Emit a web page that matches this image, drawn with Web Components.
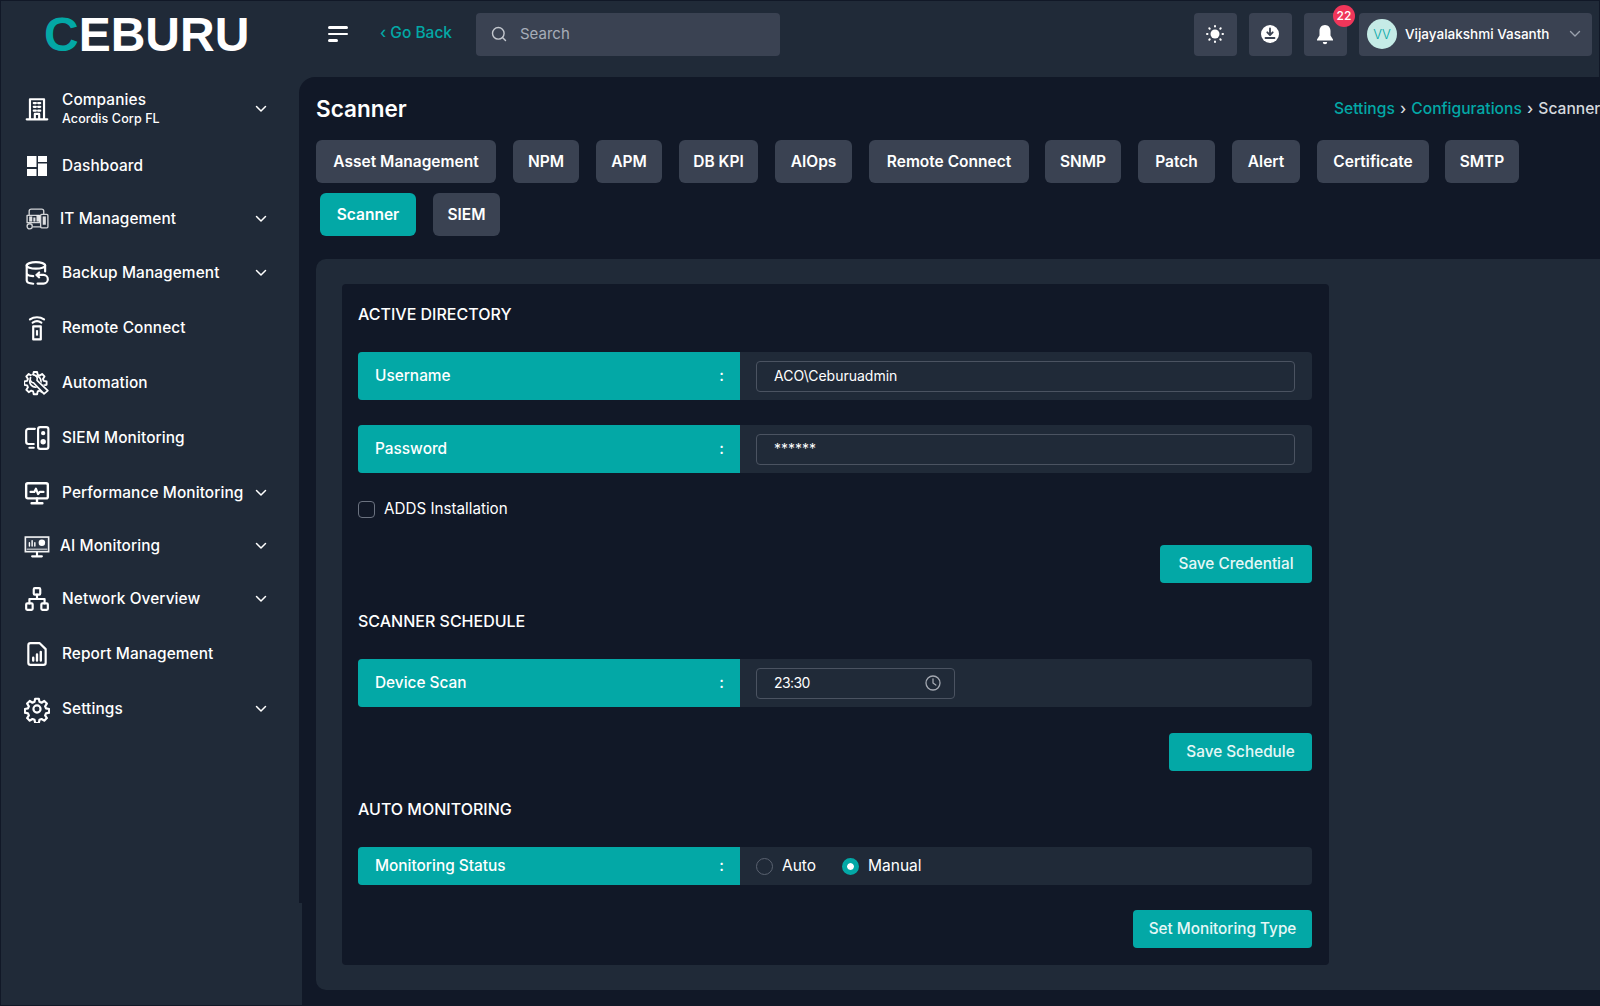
<!DOCTYPE html>
<html lang="en">
<head>
<meta charset="utf-8">
<title>Scanner</title>
<style>
  html, body { margin: 0; height: 100%; background: #111827; overflow: hidden; }
  body { font-family: Inter, "Open Sans", "Liberation Sans", sans-serif; color: #fff; }
</style>
</head>
<body>
<app-shell>
  <app-sidebar slot="side"></app-sidebar>
  <app-topbar slot="top"></app-topbar>
  <scanner-page></scanner-page>
</app-shell>

<script>
const TEAL = "#03a8a6";
const FONT = `Inter, "Open Sans", "Liberation Sans", sans-serif`;
const GEAR = "M10.300 2.500h3.400l.6 2.900 1.900.8 2.500-1.600 2.400 2.400-1.600 2.500.8 1.900 2.900.6v3.400l-2.900.6-.8 1.900 1.600 2.500-2.400 2.400-2.500-1.600-1.900.8-.6 2.900h-3.400l-.6-2.900-1.900-.8-2.500 1.600-2.400-2.400 1.600-2.500-.8-1.900-2.900-.6v-3.400l2.900-.6.800-1.900-1.600-2.500 2.400-2.400 2.500 1.600 1.900-.8z";

const ICONS = {
  building: `<path d="M5.500 21V3h13v18M2.500 21.500h19M10 21v-4.500h4V21M9 6.500h2M13 6.500h2M9 10h2M13 10h2M9 13.500h2M13 13.500h2"/>`,
  dashboard: `<g fill="#fff" stroke="none"><rect x="2" y="2" width="9.500" height="11"/><rect x="13" y="2" width="9" height="6"/><rect x="2" y="15" width="9.500" height="7"/><rect x="13" y="9.500" width="9" height="12.500"/></g>`,
  it: `<g stroke-width="1.300" opacity=".8"><path d="M4 9V5a2 2 0 0 1 2-2h10a2 2 0 0 1 2 2v3"/><rect x="15" y="8" width="7" height="13" rx="1"/><circle cx="4.500" cy="19.500" r="2.500"/><path d="M8 20h7M2 9h12v7H2z"/></g><g fill="#fff" stroke="none" opacity=".85"><rect x="4" y="10" width="3" height="5"/><rect x="8" y="11" width="2" height="4"/><rect x="11" y="9" width="3" height="6"/><rect x="17" y="10" width="3" height="8"/></g>`,
  backup: `<ellipse cx="11" cy="5" rx="8.500" ry="3"/><path d="M2.500 5v14c0 1.500 2.500 2.700 6 2.900M19.500 5v5.500M2.500 12c0 1.500 2.500 2.700 6 2.900"/><path d="M14 11.500l-2.500 2.300 2.500 2.200M11.500 13.800h6.500a3.800 3.800 0 0 1 0 8h-5.500"/>`,
  remote: `<path d="M8.500 10.500h7v12h-7zM8 7c2.400-1.600 5.600-1.600 8 0M5.500 4c3.800-2.600 9.200-2.600 13 0"/><rect x="11" y="14" width="2" height="5" fill="#fff" stroke="none"/>`,
  automation: `<path d="${GEAR}" transform="translate(-.5 -.5) scale(.92)" stroke-width="1.900"/><circle cx="10.500" cy="10.500" r="5.200" stroke-width="1.600"/><path d="M8 8l13 13" stroke="#202a38" stroke-width="6"/><path d="M9 12l9.500 10M12 9.500l10 9.500M18.500 22l3.500-3M6 7a3.600 3.600 0 0 0 3 5M12 9.500a3.600 3.600 0 0 0-3-5" stroke-width="1.600"/>`,
  siem: `<path d="M10 3.500H4a2 2 0 0 0-2 2v10a2 2 0 0 0 2 2h5M5 21h4"/><rect x="13" y="2" width="9.500" height="20" rx="2"/><circle cx="17.700" cy="7.500" r="1" fill="#fff"/><circle cx="17.700" cy="15.500" r="1.500" fill="#fff"/>`,
  perf: `<rect x="2" y="3" width="20" height="14" rx="1.500" stroke-width="2.200"/><path d="M12 17v4M7 21.500h10" stroke-width="2.200"/><path d="M6 11h3.500l1.500-3 2 5 1.500-2h3.500"/>`,
  ai: `<rect x="0.500" y="3" width="23" height="15" fill="#fff" stroke="none" opacity=".95"/><rect x="2" y="4.500" width="20" height="12" fill="#2f3948" stroke="none"/><path d="M12 18v3M7.500 21.500h9" stroke-width="2"/><path d="M3 15h18" stroke-width="1.500" opacity=".6"/><path d="M5 12V9M7.500 12V7M10 12V9" stroke-width="1.300"/><circle cx="16.500" cy="9" r="3" fill="#fff" stroke="none"/>`,
  network: `<rect x="9" y="2" width="6" height="6" rx="1"/><rect x="2" y="16" width="6" height="6" rx="1"/><rect x="16" y="16" width="6" height="6" rx="1"/><path d="M12 8v4M5 16v-4h14v4"/>`,
  report: `<path d="M6 2h8.500l5.500 5.500V20a2 2 0 0 1-2 2H6a2 2 0 0 1-2-2V4a2 2 0 0 1 2-2z"/><path d="M8.500 18v-2.500M12 18v-5.500M15.500 18V10" stroke-width="2.200"/>`,
  settings: `<circle cx="12" cy="12" r="3.300"/><path d="${GEAR}"/>`
};

function svgIcon(name, size) {
  return `<svg viewBox="0 0 24 24" width="${size}" height="${size}" fill="none" stroke="#fff" stroke-width="2" stroke-linecap="round" stroke-linejoin="round">${ICONS[name]}</svg>`;
}

// Page frame: sidebar on the left, topbar + content on the right
class AppShell extends HTMLElement {
  constructor() {
    super();
    this.attachShadow({ mode: "open" }).innerHTML = `
    <style>
      :host { display: grid; grid-template-columns: 299px 1fr; width: 1600px; height: 1006px; overflow: hidden;
        background: #111827; position: relative; }
      .right { display: flex; flex-direction: column; min-width: 0; background: #202a38; height: 1006px; }
      .content { flex: 1; background: #111827; border-top-left-radius: 16px; min-height: 0; }
    </style>
    <slot name="side"></slot>
    <div class="right">
      <slot name="top"></slot>
      <div class="content"><slot></slot></div>
    </div>`;
  }
}

class NavItem extends HTMLElement {
  constructor() {
    super();
    const icon = this.getAttribute("icon");
    const size = this.getAttribute("size") || 26;
    const chevron = this.hasAttribute("chevron");
    const gap = this.getAttribute("gap") || 12;
    this.attachShadow({ mode: "open" }).innerHTML = `
    <style>
      :host { display: flex; align-items: center; height: 40px; padding-left: 23px; padding-right: 35px;
        box-sizing: border-box; font: 500 15.400px/20px ${FONT}; color: #fff; }
      .ic { width: 26px; display: flex; justify-content: center; flex: none; }
      .lbl { flex: 1; margin-left: ${gap}px; white-space: nowrap; letter-spacing: .1px; }
      .chev { flex: none; width: 12px; height: 8px; }
    </style>
    <span class="ic">${svgIcon(icon, size)}</span>
    <span class="lbl"><slot></slot></span>
    ${chevron ? `<svg class="chev" viewBox="0 0 12 8" fill="none" stroke="#fff" stroke-width="1.500" stroke-linecap="round" stroke-linejoin="round"><path d="M1.500 1.500 6 6l4.500-4.500"/></svg>` : ""}`;
  }
}

class AppSidebar extends HTMLElement {
  constructor() {
    super();
    this.attachShadow({ mode: "open" }).innerHTML = `
    <style>
      :host { display: block; width: 302px; height: 1006px; background: #202a38; border: solid #111827; border-width: 1px 0 1px 1px; box-sizing: border-box;
        position: relative; z-index: 2; clip-path: polygon(0 0, 299px 0, 299px 903px, 302px 903px, 302px 100%, 0 100%); }
      .logo { height: 86px; padding: 10px 0 0 43px; box-sizing: border-box;
        font: 800 48px/1 "Liberation Sans", sans-serif; letter-spacing: 0; color: #fff; }
      .logo b { color: ${TEAL}; font-weight: 800; }
      .sub { display: block; font-size: 12.500px; line-height: 18px; }
      nav { display: flex; flex-direction: column; }
      .companies { height: 44px; }
    </style>
    <div class="logo"><span><b>C</b>EBURU</span></div>
    <nav>
      <nav-item class="companies" icon="building" chevron>Companies<span class="sub">Acordis Corp FL</span></nav-item>
      <nav-item icon="dashboard" size="24" style="margin-top:15px">Dashboard</nav-item>
      <nav-item icon="it" size="25" chevron gap="10" style="margin-top:12.500px">IT Management</nav-item>
      <nav-item icon="backup" chevron style="margin-top:14.500px">Backup Management</nav-item>
      <nav-item icon="remote" style="margin-top:15px">Remote Connect</nav-item>
      <nav-item icon="automation" style="margin-top:15px">Automation</nav-item>
      <nav-item icon="siem" style="margin-top:15px">SIEM Monitoring</nav-item>
      <nav-item icon="perf" chevron style="margin-top:14.500px">Performance Monitoring</nav-item>
      <nav-item icon="ai" chevron gap="10" style="margin-top:13.500px">AI Monitoring</nav-item>
      <nav-item icon="network" chevron style="margin-top:12.500px">Network Overview</nav-item>
      <nav-item icon="report" style="margin-top:15px">Report Management</nav-item>
      <nav-item icon="settings" size="28" chevron style="margin-top:15px">Settings</nav-item>
    </nav>`;
  }
}

class TopButton extends HTMLElement {
  constructor() {
    super();
    this.attachShadow({ mode: "open" }).innerHTML = `
    <style>
      :host { display: flex; align-items: center; justify-content: center; width: 43px; height: 43px; background: #3a4252;
        border-radius: 4px; position: relative; flex: none; padding-right: 2px; box-sizing: border-box; }
    </style>
    <slot></slot>`;
  }
}

class AppTopbar extends HTMLElement {
  constructor() {
    super();
    this.attachShadow({ mode: "open" }).innerHTML = `
    <style>
      :host { display: flex; align-items: center; height: 77px; box-sizing: border-box; padding: 0 7px 10px 0; flex: none;
        border-top: 1px solid #111827; border-right: 1px solid #111827; }
      .burger { width: 20px; margin-left: 29px; display: flex; flex-direction: column; gap: 4px; }
      .burger i { display: block; height: 2.500px; background: #fff; border-radius: 2px; }
      .burger i:last-child { width: 10px; }
      .back { color: ${TEAL}; font: 500 15.500px/20px ${FONT}; margin-left: 32px; width: 96px; margin-top: -2px; }
      .search { width: 304px; height: 43px; background: #3a4252; border-radius: 4px; display: flex; align-items: center;
        padding-left: 15px; box-sizing: border-box; flex: none; font: 400 15px/20px ${FONT}; color: #a7adb8; gap: 13px; }
      .spacer { flex: 1; }
      .btns { display: flex; gap: 12px; align-items: center; }
      .badge { position: absolute; right: -8px; top: -8px; width: 22px; height: 22px; border-radius: 50%; background: #f0365a;
        color: #fff; font: 500 12px/22px ${FONT}; text-align: center; }
      .user { width: 233px; height: 43px; background: #3a4252; border-radius: 4px; display: flex; align-items: center;
        padding-left: 8px; box-sizing: border-box; font: 500 13.500px/20px ${FONT}; }
      .avatar { width: 30px; height: 30px; border-radius: 50%; background: #c5ebe6; color: ${TEAL}; font: 300 13px/30px ${FONT};
        text-align: center; flex: none; margin-right: 8px; }
      .name { flex: 1; white-space: nowrap; }
      .caret { margin-right: 11px; }
    </style>
    <div class="burger"><i></i><i></i><i></i></div>
    <div class="back">&lsaquo; Go Back</div>
    <div class="search">
      <svg width="16" height="16" viewBox="0 0 16 16" fill="none" stroke="#c4c8cf" stroke-width="1.400" stroke-linecap="round"><circle cx="7.300" cy="7.300" r="5.800"/><path d="M11.500 11.500 14.500 14.500"/></svg>
      <span>Search</span>
    </div>
    <div class="spacer"></div>
    <div class="btns">
      <top-button><svg width="18" height="18" viewBox="0 0 18 18" fill="#fff"><circle cx="9" cy="9" r="4.500"/><g stroke="#fff" stroke-width="2" stroke-linecap="round"><path d="M9 1v.5M9 16.500v.5M1 9h.5M16.500 9h.5M3.300 3.300l.4.4M14.300 14.300l.4.4M3.300 14.700l.4-.4M14.300 3.700l.4-.4"/></g></svg></top-button>
      <top-button><svg width="20" height="20" viewBox="0 0 20 20"><circle cx="10" cy="10" r="9" fill="#fff"/><path d="M10 4.500v6M7.300 8.300 10 11l2.700-2.700M5.500 14h9" fill="none" stroke="#3a4252" stroke-width="1.800" stroke-linecap="round" stroke-linejoin="round"/></svg></top-button>
      <top-button><svg width="18" height="21" viewBox="0 0 18 21" fill="#fff"><path d="M9 1C5.500 1 3.500 3.800 3.500 7v4.500L1 15.500v1h16v-1l-2.500-4V7C14.500 3.800 12.500 1 9 1z"/><path d="M6.800 18h4.400a2.200 2.200 0 0 1-4.400 0z"/></svg><span class="badge">22</span></top-button>
      <div class="user">
        <span class="avatar">VV</span>
        <span class="name">Vijayalakshmi Vasanth</span>
        <svg class="caret" width="12" height="8" viewBox="0 0 12 8" fill="none" stroke="#9aa1ad" stroke-width="1.400" stroke-linecap="round" stroke-linejoin="round"><path d="M1.500 1.500 6 6l4.500-4.500"/></svg>
      </div>
    </div>`;
  }
}

class TabButton extends HTMLElement {
  constructor() {
    super();
    this.attachShadow({ mode: "open" }).innerHTML = `
    <style>
      :host { display: flex; align-items: center; justify-content: center; height: 43px; border-radius: 6px; background: #3a4252;
        color: #fff; font: 600 15.500px/20px ${FONT}; white-space: nowrap; flex: none; box-sizing: border-box; }
      :host([active]) { background: ${TEAL}; }
    </style>
    <slot></slot>`;
  }
}

class AppButton extends HTMLElement {
  constructor() {
    super();
    this.attachShadow({ mode: "open" }).innerHTML = `
    <style>
      :host { display: flex; align-items: center; justify-content: center; height: 38px; border-radius: 4px; background: ${TEAL};
        color: #e6f7f6; font: 500 15.300px/20px ${FONT}; white-space: nowrap; }
    </style>
    <slot></slot>`;
  }
}

class FormRow extends HTMLElement {
  constructor() {
    super();
    this.attachShadow({ mode: "open" }).innerHTML = `
    <style>
      :host { display: grid; grid-template-columns: 382px 1fr; height: var(--h, 48px); border-radius: 4px; background: #202a38; overflow: hidden; }
      .label { background: ${TEAL}; display: flex; align-items: center; justify-content: space-between; padding: 0 16px 0 17px;
        font: 500 15.400px/20px ${FONT}; color: #fff; }
      .value { display: flex; align-items: center; padding-left: 16px; padding-right: 17px; min-width: 0; }
    </style>
    <div class="label"><span>${this.getAttribute("label")}</span><span>:</span></div>
    <div class="value"><slot></slot></div>`;
  }
}

class TextBox extends HTMLElement {
  constructor() {
    super();
    this.attachShadow({ mode: "open" }).innerHTML = `
    <style>
      :host { display: flex; align-items: center; justify-content: space-between; height: 31px; box-sizing: border-box; border: 1px solid #4b5361;
        border-radius: 4px; padding: 0 13px 0 17px; width: var(--w, 100%); font: 400 14px/20px ${FONT}; color: #fff; }
    </style>
    <slot></slot><slot name="end"></slot>`;
  }
}

class RadioOption extends HTMLElement {
  constructor() {
    super();
    const on = this.hasAttribute("checked");
    this.attachShadow({ mode: "open" }).innerHTML = `
    <style>
      :host { display: inline-flex; align-items: center; gap: 9px; font: 400 15.500px/20px ${FONT}; color: #fff; margin-right: 26px; }
      i { display: block; width: 17px; height: 17px; box-sizing: border-box; border-radius: 50%;
        ${on ? `background: ${TEAL}; border: 5px solid ${TEAL}; box-shadow: inset 0 0 0 4px #fff;` : "border: 1px solid #5a6270;"} }
    </style>
    <i></i><slot></slot>`;
  }
}

class CheckOption extends HTMLElement {
  constructor() {
    super();
    this.attachShadow({ mode: "open" }).innerHTML = `
    <style>
      :host { display: flex; align-items: center; gap: 9px; font: 400 15.200px/20px ${FONT}; color: #fff; }
      i { display: block; width: 17px; height: 17px; box-sizing: border-box; border: 1px solid #6b7280; border-radius: 4px; }
    </style>
    <i></i><slot></slot>`;
  }
}

class ScannerPage extends HTMLElement {
  constructor() {
    super();
    const tabs1 = [["Asset Management",180,17],["NPM",66,17],["APM",66,17],["DB KPI",79,17],["AIOps",77,17],["Remote Connect",160,16],
      ["SNMP",76,17],["Patch",77,17],["Alert",68,17],["Certificate",112,16],["SMTP",74,0]];
    const row1 = tabs1.map(([t, w, g]) => `<tab-button style="width:${w}px;margin-right:${g}px">${t}</tab-button>`).join("");
    this.attachShadow({ mode: "open" }).innerHTML = `
    <style>
      :host { display: block; padding: 0 0 0 17px; height: 100%; box-sizing: border-box; }
      .head { display: flex; align-items: center; justify-content: space-between; height: 63px; }
      h1 { margin: 0; font: 600 22.500px/28px ${FONT}; color: #fff; }
      .crumbs { font: 500 15.600px/20px ${FONT}; color: #d6d9de; white-space: nowrap; width: 266px; overflow: hidden; flex: none; }
      .crumbs a { color: ${TEAL}; text-decoration: none; }
      .crumbs span { margin: 0 1px; }
      .tabs { display: flex; flex-wrap: nowrap; }
      .tabs + .tabs { margin-top: 10px; padding-left: 4px; }
      .outer { margin-top: 23px; background: #202a38; border-radius: 10px 0 0 10px; padding: 25px 0 25px 26px; }
      .inner { width: 987px; height: 681px; background: #111827; border-radius: 4px; padding: 0 17px 0 16px; box-sizing: border-box; display: flex; flex-direction: column; }
      h2 { margin: 0; font: 500 16px/20px ${FONT}; color: #fff; text-transform: uppercase; }
      .end { display: flex; justify-content: flex-end; }
      .t1 { margin-top: 20px; } .g1 { margin-top: 28px; }
      .g2 { margin-top: 25px; } .c { margin-top: 26px; }
      .b1 { margin-top: 26px; } .t2 { margin-top: 28px; }
      .g3 { margin-top: 28px; } .b2 { margin-top: 26px; }
      .t3 { margin-top: 28px; } .g4 { margin-top: 28px; } .b3 { margin-top: 25px; }
    </style>
    <div class="head"><h1>Scanner</h1>
      <div class="crumbs"><a>Settings</a><span> &rsaquo; </span><a>Configurations</a><span> &rsaquo; </span>Scanner</div></div>
    <div class="tabs">${row1}</div>
    <div class="tabs"><tab-button active style="width:96px;margin-right:17px">Scanner</tab-button><tab-button style="width:67px">SIEM</tab-button></div>
    <div class="outer"><div class="inner">
      <h2 class="t1">Active Directory</h2>
      <form-row class="g1" label="Username"><text-box>ACO\\Ceburuadmin</text-box></form-row>
      <form-row class="g2" label="Password"><text-box>******</text-box></form-row>
      <check-option class="c">ADDS Installation</check-option>
      <div class="end b1"><app-button style="width:152px">Save Credential</app-button></div>
      <h2 class="t2">Scanner Schedule</h2>
      <form-row class="g3" label="Device Scan"><text-box style="--w:199px"><span style="letter-spacing:-.6px">23:30</span>
        <svg slot="end" width="16" height="16" viewBox="0 0 16 16" fill="none" stroke="#a3a8b1" stroke-width="1.300" stroke-linecap="round" stroke-linejoin="round"><circle cx="8" cy="8" r="7"/><path d="M8 3.800V8l2.800 2"/></svg>
      </text-box></form-row>
      <div class="end b2"><app-button style="width:143px">Save Schedule</app-button></div>
      <h2 class="t3">Auto Monitoring</h2>
      <form-row class="g4" label="Monitoring Status" style="--h:38px"><radio-option>Auto</radio-option><radio-option checked>Manual</radio-option></form-row>
      <div class="end b3"><app-button style="width:179px">Set Monitoring Type</app-button></div>
    </div></div>`;
  }
}

customElements.define("app-shell", AppShell);
customElements.define("nav-item", NavItem);
customElements.define("app-sidebar", AppSidebar);
customElements.define("top-button", TopButton);
customElements.define("app-topbar", AppTopbar);
customElements.define("tab-button", TabButton);
customElements.define("app-button", AppButton);
customElements.define("form-row", FormRow);
customElements.define("text-box", TextBox);
customElements.define("radio-option", RadioOption);
customElements.define("check-option", CheckOption);
customElements.define("scanner-page", ScannerPage);
</script>
</body>
</html>
